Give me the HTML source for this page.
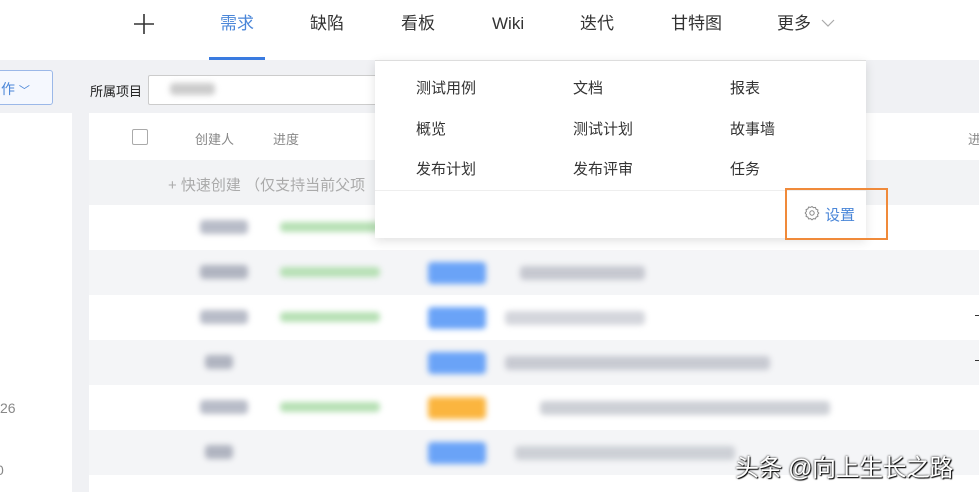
<!DOCTYPE html>
<html><head><meta charset="utf-8"><style>
*{margin:0;padding:0;box-sizing:border-box}
body{width:979px;height:492px;overflow:hidden;background:#f0f1f4;font-family:"Liberation Sans","Noto Sans CJK SC",sans-serif;position:relative;color:#333}
.a{position:absolute}
.nav{left:0;top:0;width:979px;height:60px;background:#fff}
.nt{top:11px;font-size:17px;line-height:26px;color:#333}
.b{filter:blur(3px);border-radius:4px}
.dd{left:375px;top:60px;width:491px;height:178px;background:#fff;box-shadow:0 3px 10px rgba(0,0,0,.12);border-top:1px solid #ddd}
.di{font-size:15px;color:#333}
</style></head><body>
<div class="a nav"></div>
<svg class="a" style="left:134px;top:14px" width="20" height="20" viewBox="0 0 20 20"><path d="M10 0v20M0 10h20" stroke="#333" stroke-width="1.6"/></svg>
<div class="a nt" style="left:220px;color:#4a86d8">需求</div>
<div class="a" style="left:209px;top:57px;width:56px;height:3px;background:#3a7be0"></div>
<div class="a nt" style="left:310px">缺陷</div>
<div class="a nt" style="left:401px">看板</div>
<div class="a nt" style="left:492px">Wiki</div>
<div class="a nt" style="left:580px">迭代</div>
<div class="a nt" style="left:671px">甘特图</div>
<div class="a nt" style="left:777px">更多</div>
<svg class="a" style="left:821px;top:19px" width="14" height="9" viewBox="0 0 14 9"><path d="M1 1l6 6 6-6" fill="none" stroke="#aaa" stroke-width="1.2"/></svg>

<div class="a" style="left:-5px;top:70px;width:58px;height:35px;border:1px solid #9bb8e8;border-radius:3px;background:#f5f8fe;color:#4a86d8;font-size:14px;padding:8px 0 0 5px">作 <span style="font-size:11px">﹀</span></div>
<div class="a" style="left:0;top:113px;width:72px;height:379px;background:#fff"></div>
<div class="a" style="left:0;top:400px;font-size:14px;color:#888">26</div>
<div class="a" style="left:-4px;top:462px;font-size:14px;color:#888">0</div>

<div class="a" style="left:90px;top:81px;font-size:13px;color:#222">所属项目</div>
<div class="a" style="left:148px;top:75px;width:240px;height:30px;background:#fff;border:1px solid #ccc;border-radius:2px"></div>
<div class="a b" style="left:170px;top:83px;width:45px;height:12px;background:#ccc"></div>

<div class="a" style="left:89px;top:113px;width:890px;height:379px;background:#fff"></div>
<div class="a" style="left:132px;top:129px;width:16px;height:16px;border:1px solid #aaa;border-radius:2px;background:#fff"></div>
<div class="a" style="left:195px;top:129px;font-size:13px;color:#888">创建人</div>
<div class="a" style="left:273px;top:129px;font-size:13px;color:#888">进度</div>
<div class="a" style="left:968px;top:129px;font-size:13px;color:#888">进</div>
<div class="a" style="left:89px;top:160px;width:890px;height:45px;background:#f2f3f5"></div>
<div class="a" style="left:168px;top:174px;font-size:15px;color:#aaa">+ 快速创建 （仅支持当前父项</div>
<div class="a" style="left:89px;top:250px;width:890px;height:45px;background:#f4f5f7"></div>
<div class="a" style="left:89px;top:340px;width:890px;height:45px;background:#f4f5f7"></div>
<div class="a" style="left:89px;top:430px;width:890px;height:45px;background:#f4f5f7"></div>

<div class="a b" style="left:200px;top:220px;width:48px;height:14px;background:#b8bcc8"></div>
<div class="a b" style="left:280px;top:222px;width:100px;height:10px;background:#b6e0b4"></div>
<div class="a b" style="left:200px;top:265px;width:48px;height:14px;background:#b0b4c0"></div>
<div class="a b" style="left:280px;top:267px;width:100px;height:10px;background:#b6e0b4"></div>
<div class="a b" style="left:428px;top:262px;width:58px;height:22px;background:#6aa3f7"></div>
<div class="a b" style="left:520px;top:266px;width:125px;height:14px;background:#c6c8d0"></div>
<div class="a b" style="left:200px;top:310px;width:48px;height:14px;background:#b8bcc8"></div>
<div class="a b" style="left:280px;top:312px;width:100px;height:10px;background:#b6e0b4"></div>
<div class="a b" style="left:428px;top:307px;width:58px;height:22px;background:#6aa3f7"></div>
<div class="a b" style="left:505px;top:311px;width:140px;height:14px;background:#d4d6dc"></div>
<div class="a b" style="left:205px;top:355px;width:28px;height:14px;background:#b0b4c0"></div>
<div class="a b" style="left:428px;top:352px;width:58px;height:22px;background:#6aa3f7"></div>
<div class="a b" style="left:505px;top:356px;width:265px;height:14px;background:#c8cad2"></div>
<div class="a b" style="left:200px;top:400px;width:48px;height:14px;background:#b8bcc8"></div>
<div class="a b" style="left:280px;top:402px;width:100px;height:10px;background:#b6e0b4"></div>
<div class="a b" style="left:428px;top:397px;width:58px;height:22px;background:#fbb53f"></div>
<div class="a b" style="left:540px;top:401px;width:290px;height:14px;background:#cdd0d6"></div>
<div class="a b" style="left:205px;top:445px;width:28px;height:14px;background:#b0b4c0"></div>
<div class="a b" style="left:428px;top:442px;width:58px;height:22px;background:#6aa3f7"></div>
<div class="a b" style="left:515px;top:446px;width:220px;height:14px;background:#cdd0d6"></div>
<div class="a" style="left:975px;top:315px;width:4px;height:1px;background:#333"></div>
<div class="a" style="left:975px;top:360px;width:4px;height:1px;background:#333"></div>

<div class="a dd"></div>
<div class="a di" style="left:416px;top:77px">测试用例</div>
<div class="a di" style="left:573px;top:77px">文档</div>
<div class="a di" style="left:730px;top:77px">报表</div>
<div class="a di" style="left:416px;top:118px">概览</div>
<div class="a di" style="left:573px;top:118px">测试计划</div>
<div class="a di" style="left:730px;top:118px">故事墙</div>
<div class="a di" style="left:416px;top:158px">发布计划</div>
<div class="a di" style="left:573px;top:158px">发布评审</div>
<div class="a di" style="left:730px;top:158px">任务</div>
<div class="a" style="left:375px;top:190px;width:491px;height:1px;background:#eee"></div>
<svg class="a" style="left:804px;top:205px" width="16" height="16" viewBox="0 0 16 16"><path d="M8 1.5l1.5 1.2 1.9-.3.7 1.8 1.8.7-.3 1.9L14.8 8l-1.2 1.5.3 1.9-1.8.7-.7 1.8-1.9-.3L8 14.8l-1.5-1.2-1.9.3-.7-1.8-1.8-.7.3-1.9L1.2 8l1.2-1.5-.3-1.9 1.8-.7.7-1.8 1.9.3z" fill="none" stroke="#888" stroke-width="1"/><circle cx="8" cy="8" r="2.2" fill="none" stroke="#888"/></svg>
<div class="a" style="left:825px;top:204px;font-size:15px;color:#4a86d8">设置</div>
<div class="a" style="left:785px;top:188px;width:103px;height:52px;border:2px solid #f08a3a"></div>

<div class="a" style="left:735px;top:448px;font-size:24px;color:#fff;text-shadow:0 0 2px #000,1px 1px 1px #000;letter-spacing:-0.5px;white-space:nowrap">头条 @向上生长之路</div>
</body></html>
